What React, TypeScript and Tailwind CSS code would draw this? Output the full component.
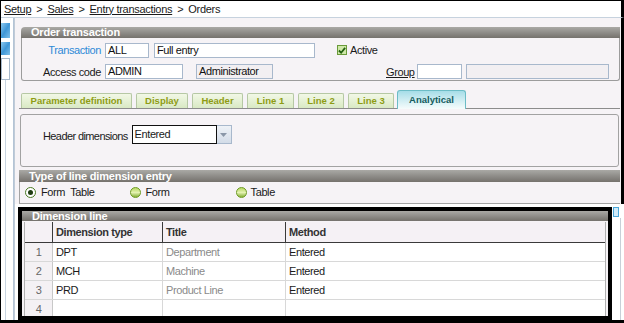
import React from 'react'

// grey header strip used above each group box
function Bar({ title, className = '' }: { title: string; className?: string }) {
  return (
    <div
      className={`bg-gradient-to-b from-[#aaa9a5] via-[#8f8d89] to-[#75726d] text-white font-bold text-[11px] leading-none pl-[10px] flex items-center tracking-[-0.2px] ${className}`}
    >
      {title}
    </div>
  )
}

function Field({ value, w, grey = false }: { value: string; w: string; grey?: boolean }) {
  return (
    <div
      className={`${w} h-[15px] border border-[#a8b8cc] ${grey ? 'bg-[#f2eff2]' : 'bg-white'} text-[11px] leading-[13px] pl-[2px] text-[#111] tracking-[-0.4px] whitespace-nowrap overflow-hidden`}
    >
      {value}
    </div>
  )
}

function Radio({ on = false }: { on?: boolean }) {
  if (on) {
    return (
      <div className="w-[11px] h-[11px] rounded-full border border-[#4a7a24] bg-white flex items-center justify-center">
        <div className="w-[5px] h-[5px] rounded-full bg-[#1f3c12]" />
      </div>
    )
  }
  return (
    <div className="w-[11px] h-[11px] rounded-full border border-[#6c9a22] bg-gradient-to-b from-[#b8d860] via-[#e4f2b0] to-[#86b030]" />
  )
}

const tabs = [
  { label: 'Parameter definition', w: 'w-[111px]' },
  { label: 'Display', w: 'w-[52px]' },
  { label: 'Header', w: 'w-[51px]' },
  { label: 'Line 1', w: 'w-[47px]' },
  { label: 'Line 2', w: 'w-[46px]' },
  { label: 'Line 3', w: 'w-[46px]' },
]

const rows = [
  { n: '1', type: 'DPT', title: 'Department', method: 'Entered' },
  { n: '2', type: 'MCH', title: 'Machine', method: 'Entered' },
  { n: '3', type: 'PRD', title: 'Product Line', method: 'Entered' },
  { n: '4', type: '', title: '', method: '' },
]

export default function App() {
  return (
    <div className="w-[624px] h-[323px] overflow-hidden bg-white border-t border-l border-b-[3px] border-black flex flex-col font-['Liberation_Sans',Arial,sans-serif] text-[#1a1a1a]">
      {/* Breadcrumb */}
      <div className="h-[17px] shrink-0 border-b border-[#c6d2de] border-r-[3px] border-r-black flex items-center pl-[3px] text-[11px] tracking-[-0.3px]">
        <span className="underline">Setup</span>
        <span className="mx-[5px]">&gt;</span>
        <span className="underline">Sales</span>
        <span className="mx-[5px]">&gt;</span>
        <span className="underline">Entry transactions</span>
        <span className="mx-[5px]">&gt;</span>
        <span>Orders</span>
      </div>

      <div className="flex flex-1 min-h-0">
        {/* Left strip */}
        <div className="w-[13px] shrink-0 bg-white border-r border-[#b4c4d6] flex flex-col">
          <div className="mt-[5px] w-[9px] h-[15px] bg-gradient-to-br from-[#8ccaf0] via-[#3f97d6] to-[#7cc0ea]" />
          <div className="mt-[4px] w-[9px] h-[13px] bg-gradient-to-br from-[#8ccaf0] via-[#3f97d6] to-[#7cc0ea]" />
          <div className="mt-[3px] w-[9px] h-[22px] border border-[#a8bacc] bg-white" />
          <div className="ml-[4px] w-px flex-1 bg-[#c8d4e0]" />
        </div>

        <div className="flex-1 flex flex-col min-w-0">
          {/* Upper part */}
          <div className="bg-[#f6f3f6] border-l border-[#c0ccd8] border-r-[3px] border-r-black pl-[4px] pr-[1px] flex flex-col">
            {/* Order transaction */}
            <div className="mt-[9px] ml-[2px]">
              <Bar title="Order transaction" className="h-[11px] rounded-tl-[4px]" />
              <div className="h-[43px] border border-t-0 border-[#9c9c9c] rounded-b-[3px] pt-[4px] flex flex-col gap-[5px]">
                <div className="flex items-center">
                  <div className="w-[83px] pr-[4px] text-right text-[11px] text-[#2f8ad6] tracking-[-0.4px]">Transaction</div>
                  <Field value="ALL" w="w-[44px]" />
                  <div className="ml-[5px]"><Field value="Full entry" w="w-[161px]" /></div>
                  <div className="ml-[22px] w-[10px] h-[10px] border border-[#6a9a3a] bg-[#cfe8a8] flex items-center justify-center">
                    <svg width="9" height="9" viewBox="0 0 9 9">
                      <path d="M1 4.5 L3.5 7 L8 1.5" stroke="#236010" strokeWidth="2" fill="none" />
                    </svg>
                  </div>
                  <span className="ml-[3px] text-[11px] tracking-[-0.4px]">Active</span>
                </div>
                <div className="flex items-center">
                  <div className="w-[83px] pr-[4px] text-right text-[11px] tracking-[-0.4px]">Access code</div>
                  <Field value="ADMIN" w="w-[78px]" />
                  <div className="ml-[13px]"><Field value="Administrator" w="w-[77px]" grey /></div>
                  <span className="ml-[113px] w-[26px] text-[11px] underline tracking-[-0.4px]">Group</span>
                  <div className="ml-[5px]"><Field value="" w="w-[45px]" /></div>
                  <div className="ml-[4px]"><Field value="" w="w-[143px]" grey /></div>
                </div>
              </div>
            </div>

            {/* Tabs */}
            <div className="mt-[9px] h-[19px] border-b border-[#8c8c8c] flex items-end gap-[4px] pl-[2px]">
              {tabs.map((t) => (
                <div
                  key={t.label}
                  className={`${t.w} h-[15px] border border-b-0 border-[#b6c8a4] rounded-t-[2px] bg-gradient-to-b from-[#f2f8e6] to-[#d9e9c4] text-[#8e9c14] font-bold text-[9.5px] flex items-center justify-center whitespace-nowrap`}
                >
                  {t.label}
                </div>
              ))}
              <div className="-ml-[1px] w-[69px] h-[19px] -mb-px border border-b-0 border-[#6cbcc6] rounded-t-[3px] bg-gradient-to-b from-[#a6dde8] to-[#f6fcfc] text-[#155c5e] font-bold text-[9.5px] flex items-center justify-center">
                Analytical
              </div>
            </div>

            {/* Analytical tab content */}
            <div className="mt-[5px] ml-[1px] mr-[1px] h-[53px] border border-[#a2a2a2] rounded-[3px] pt-[10px] pl-[22px] flex items-start">
              <span className="mt-[3px] mr-[4px] shrink-0 text-[11px] tracking-[-0.6px] whitespace-nowrap">Header dimensions</span>
              <div className="w-[85px] h-[19px] border border-[#111] bg-white text-[11px] leading-[17px] pl-[2px] tracking-[-0.4px]">Entered</div>
              <div className="w-[15px] h-[19px] border border-l-0 border-[#a8b8cc] bg-gradient-to-b from-[#eef2f7] to-[#d3dce8] flex items-center justify-center">
                <svg width="7" height="4" viewBox="0 0 7 4">
                  <path d="M0 0 H7 L3.5 4 Z" fill="#8a97a8" />
                </svg>
              </div>
            </div>

            <Bar title="Type of line dimension entry" className="mt-[3px] h-[12px]" />
            <div className="h-[22px] border-l border-b border-[#a4a4a4] flex items-center text-[11px] tracking-[-0.4px]">
              <div className="ml-[5px]"><Radio on /></div>
              <span className="ml-[5px]">Form&nbsp; Table</span>
              <div className="ml-[36px]"><Radio /></div>
              <span className="ml-[4px]">Form</span>
              <div className="ml-[66px]"><Radio /></div>
              <span className="ml-[4px]">Table</span>
            </div>
          </div>

          {/* Lower part: dimension lines */}
          <div className="flex-1 min-h-0 border-l border-[#c0ccd8] pl-[3px] flex items-start">
            <div className="mt-[3px] w-[594px] h-[113px] border-4 border-black bg-[#f6f3f6] flex flex-col overflow-hidden">
              <Bar title="Dimension line" className="h-[10px] text-[10.5px]" />
              <div className="mt-[1px] mx-[2px] flex-1 border-l border-r border-[#b0b0b0] bg-white overflow-hidden">
                <div className="grid grid-cols-[28px_110px_123px_1fr] h-[21px] bg-[#f5f1f5] border-b border-[#3a3a3a] text-[11px] font-bold text-[#333] tracking-[-0.4px]">
                  <div className="border-r border-[#3a3a3a]" />
                  <div className="border-r border-[#3a3a3a] pl-[3px] flex items-center">Dimension type</div>
                  <div className="border-r border-[#3a3a3a] pl-[3px] flex items-center">Title</div>
                  <div className="pl-[3px] flex items-center">Method</div>
                </div>
                {rows.map((r) => (
                  <div key={r.n} className="grid grid-cols-[28px_110px_123px_1fr] h-[19px] border-b border-[#d8d8d8] text-[11px] tracking-[-0.4px]">
                    <div className="border-r border-[#c8c8c8] bg-[#f4f1f4] text-[#666] flex items-center justify-center">{r.n}</div>
                    <div className="border-r border-[#d8d8d8] pl-[3px] flex items-center">{r.type}</div>
                    <div className="border-r border-[#d8d8d8] pl-[3px] flex items-center text-[#8a8a8a]">{r.title}</div>
                    <div className="pl-[3px] flex items-center">{r.method}</div>
                  </div>
                ))}
              </div>
            </div>
            <div className="mt-[3px] ml-[1px] w-[6px] h-[10px] border border-[#4aa6d8] bg-[#cfe9f8]" />
            <div className="ml-[1px] w-px self-stretch mt-[14px] bg-[#c8d0d8]" />
          </div>
        </div>
      </div>
    </div>
  )
}
